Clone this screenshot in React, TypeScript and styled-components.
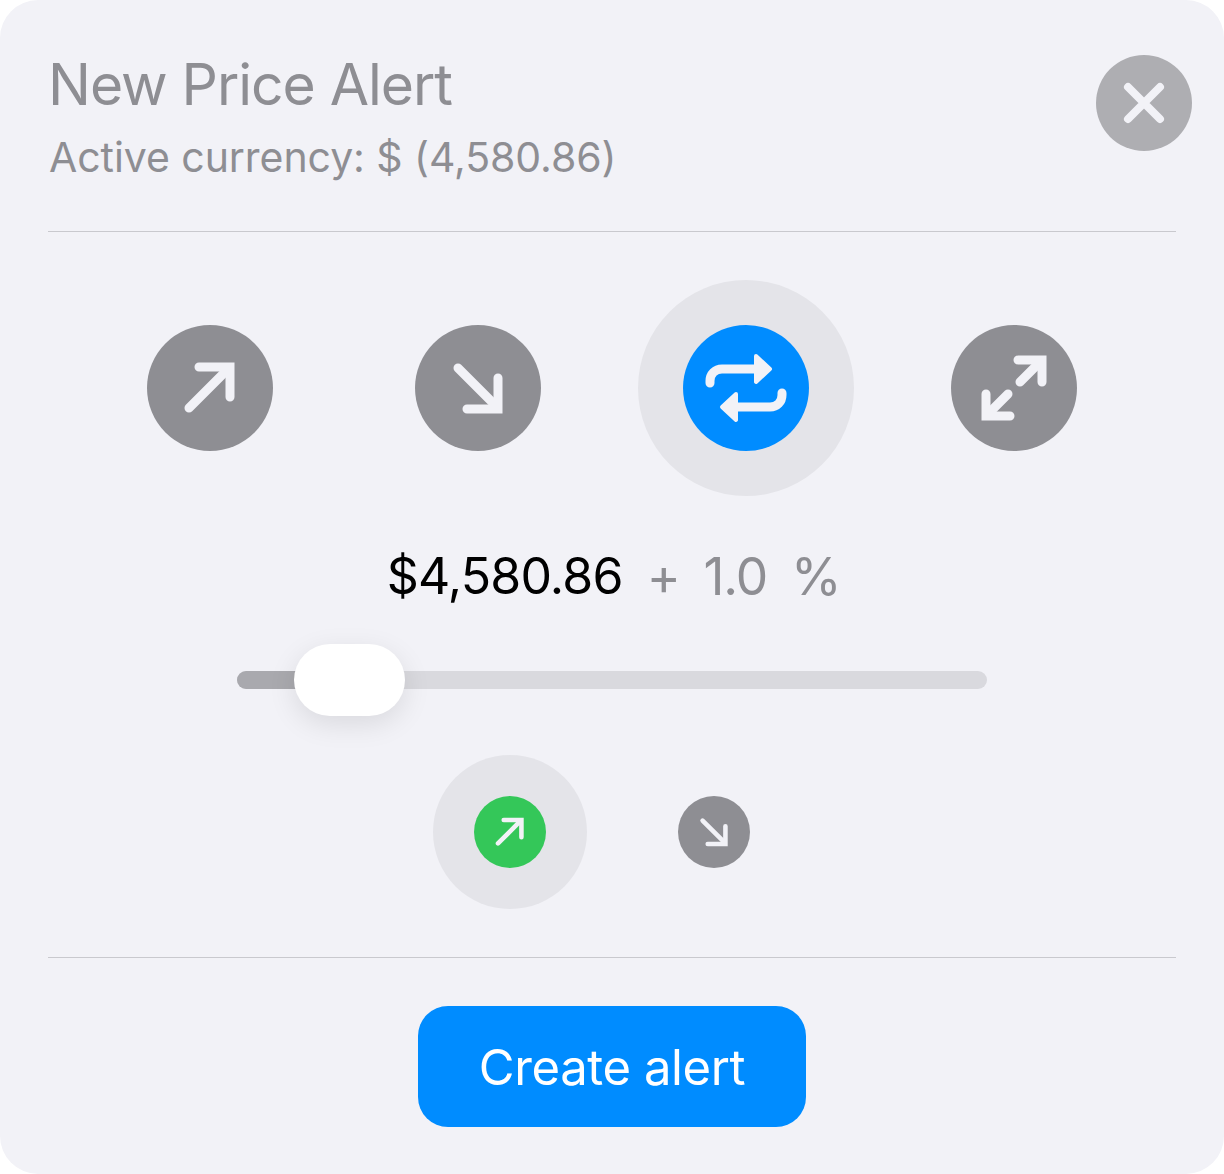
import styled, { createGlobalStyle } from "styled-components";

const GlobalStyle = createGlobalStyle`
  html, body {
    margin: 0;
    padding: 0;
    background: #fff;
  }
  body {
    font-family: "Inter", "Liberation Sans", sans-serif;
  }
`;

function ArrowUpRight() {
  return (
    <Glyph viewBox="0 0 126 126">
      <path d="M42 83 L80 45" />
      <path d="M52 42 H83 V72" strokeLinejoin="miter" />
    </Glyph>
  );
}

function ArrowDownRight() {
  return (
    <Glyph viewBox="0 0 126 126">
      <path d="M43 43 L80 80" />
      <path d="M83 53 V84 H52" strokeLinejoin="miter" />
    </Glyph>
  );
}

function RepeatArrows() {
  return (
    <Glyph viewBox="0 0 126 126">
      <path d="M27 58 V56 C27 49 32 44 39 44 H72" />
      <path d="M99 68 V70 C99 77 94 82 87 82 H54" />
      <path d="M73 31 L87 44 L73 57 Z" fill="#f2f2f7" strokeWidth="4" />
      <path d="M53 69 L39 82 L53 95 Z" fill="#f2f2f7" strokeWidth="4" />
    </Glyph>
  );
}

function ExpandArrows() {
  return (
    <Glyph viewBox="0 0 126 126">
      <path d="M69 57 L88 38" />
      <path d="M67 35 H91 V57" strokeLinejoin="miter" />
      <path d="M57 69 L38 88" />
      <path d="M59 91 H35 V69" strokeLinejoin="miter" />
    </Glyph>
  );
}

export default function App() {
  return (
    <>
      <GlobalStyle />
      <Card>
        <Header>
          <HeaderText>
            <Title>New Price Alert</Title>
            <Subtitle>Active currency: $ (4,580.86)</Subtitle>
          </HeaderText>
          <CloseButton aria-label="Close">
            <svg width="44" height="44" viewBox="0 0 44 44" fill="none" stroke="#f2f2f7" strokeWidth="8" strokeLinecap="round">
              <path d="M6 6 L38 38 M38 6 L6 38" />
            </svg>
          </CloseButton>
        </Header>

        <TypeRow>
          <TypeButton>
            <ArrowUpRight />
          </TypeButton>
          <TypeButton>
            <ArrowDownRight />
          </TypeButton>
          <TypeButton $active>
            <RepeatArrows />
          </TypeButton>
          <TypeButton>
            <ExpandArrows />
          </TypeButton>
        </TypeRow>

        <ValueRow>
          <Price>$4,580.86</Price>
          <Muted>+</Muted>
          <Muted>1.0</Muted>
          <Muted>%</Muted>
        </ValueRow>

        <Slider>
          <SliderFill />
          <SliderThumb />
        </Slider>

        <DirectionRow>
          <DirectionButton $active>
            <ArrowUpRight />
          </DirectionButton>
          <DirectionButton>
            <ArrowDownRight />
          </DirectionButton>
        </DirectionRow>

        <Footer>
          <CreateButton>Create alert</CreateButton>
        </Footer>
      </Card>
    </>
  );
}

const Card = styled.div`
  width: 1224px;
  height: 1174px;
  box-sizing: border-box;
  padding: 0 48px;
  background: #f2f2f7;
  border-radius: 38px;
  overflow: hidden;
  -webkit-font-smoothing: antialiased;
`;

const Header = styled.header`
  height: 231px;
  box-sizing: content-box;
  display: flex;
  justify-content: space-between;
  align-items: flex-start;
  border-bottom: 1px solid #c9c9ce;
`;

const HeaderText = styled.div`
  padding: 50px 0 0;
`;

const Title = styled.h1`
  margin: 0;
  font-size: 57px;
  line-height: 69px;
  font-weight: 400;
  letter-spacing: -1.05px;
  color: #8e8e93;
`;

const Subtitle = styled.p`
  margin: 13px 0 0;
  padding-left: 1px;
  font-size: 41px;
  line-height: 50px;
  font-weight: 400;
  letter-spacing: -0.06px;
  color: #8e8e93;
`;

const CloseButton = styled.button`
  width: 96px;
  height: 96px;
  margin: 55px -16px 0 0;
  padding: 0;
  border: 0;
  border-radius: 50%;
  background: #aeaeb2;
  display: flex;
  align-items: center;
  justify-content: center;
`;

const Glyph = styled.svg`
  width: 100%;
  height: 100%;
  display: block;
  fill: none;
  stroke: #f2f2f7;
  stroke-width: 9;
  stroke-linecap: round;
  stroke-linejoin: round;
`;

const TypeRow = styled.div`
  display: flex;
  justify-content: center;
  gap: 142px;
  margin-top: 93px;
`;

const TypeButton = styled.div<{ $active?: boolean }>`
  width: 126px;
  height: 126px;
  border-radius: 50%;
  background: ${(p) => (p.$active ? "#008cff" : "#8e8e93")};
  box-shadow: ${(p) => (p.$active ? "0 0 0 45px #e4e4e9" : "none")};
`;

const ValueRow = styled.div`
  display: flex;
  align-items: center;
  justify-content: center;
  gap: 24px;
  margin-top: 93px;
  padding-left: 3px;
  height: 64px;
  font-size: 50px;
  font-weight: 400;
  letter-spacing: -0.8px;
`;

const Price = styled.span`
  color: #000;
`;

const Muted = styled.span`
  color: #8e8e93;
  font-size: 51.5px;
  letter-spacing: -1.2px;
`;

const Slider = styled.div`
  position: relative;
  width: 750px;
  height: 18px;
  margin: 63px auto 0;
  border-radius: 9px;
  background: #d9d9de;
`;

const SliderFill = styled.div`
  width: 110px;
  height: 100%;
  border-radius: 9px 0 0 9px;
  background: #a9a9ae;
`;

const SliderThumb = styled.div`
  position: absolute;
  left: 57px;
  top: -27px;
  width: 111px;
  height: 72px;
  border-radius: 36px;
  background: #fff;
  box-shadow: 0 8px 28px rgba(0, 0, 0, 0.1);
`;

const DirectionRow = styled.div`
  display: flex;
  justify-content: center;
  gap: 132px;
  margin-top: 107px;
`;

const DirectionButton = styled.div<{ $active?: boolean }>`
  width: 72px;
  height: 72px;
  border-radius: 50%;
  background: ${(p) => (p.$active ? "#34c759" : "#8e8e93")};
  box-shadow: ${(p) => (p.$active ? "0 0 0 41px #e4e4e9" : "none")};

  ${Glyph} {
    stroke-width: 8;
  }
`;

const Footer = styled.footer`
  margin-top: 89px;
  padding-top: 48px;
  border-top: 1px solid #c9c9ce;
  display: flex;
  justify-content: center;
`;

const CreateButton = styled.button`
  width: 388px;
  height: 121px;
  padding: 2px 0 0;
  border: 0;
  border-radius: 30px;
  background: #008cff;
  color: #fff;
  font-family: "Inter", "Liberation Sans", sans-serif;
  font-size: 49px;
  font-weight: 400;
  letter-spacing: -0.4px;
`;
